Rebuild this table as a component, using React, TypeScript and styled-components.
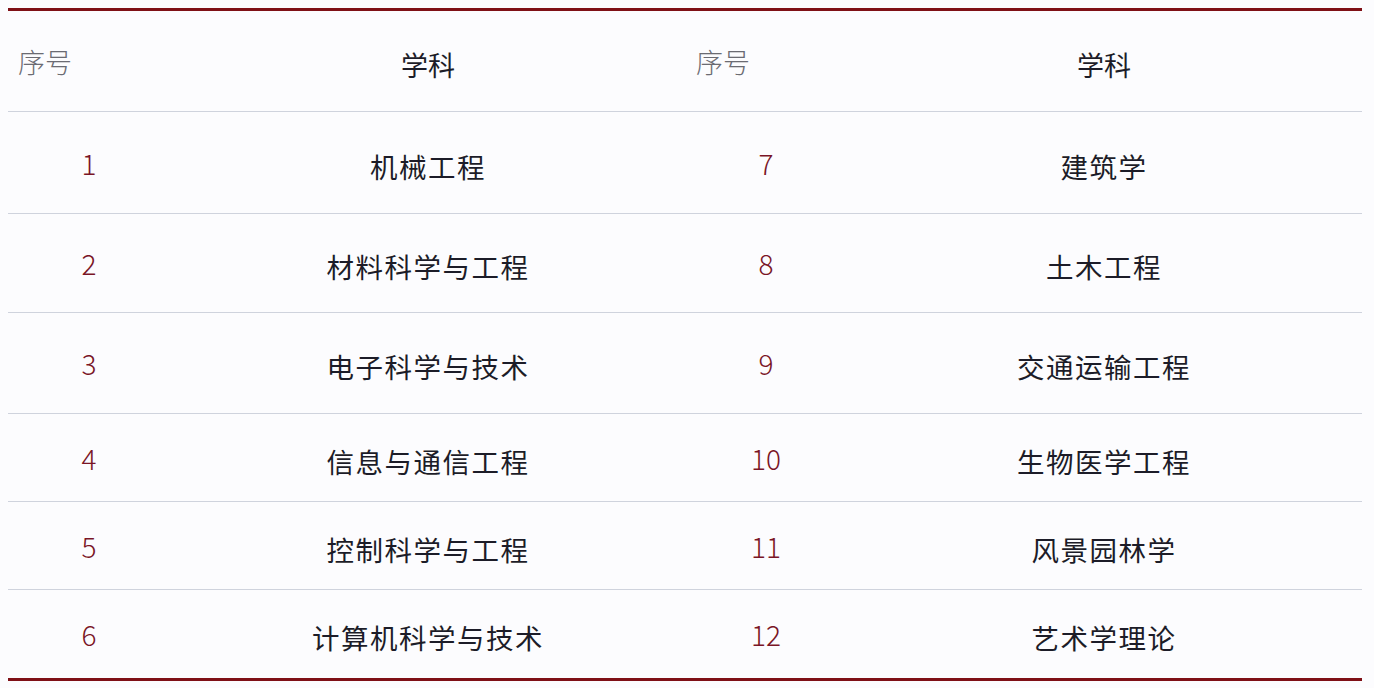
import React from 'react';
import styled, { createGlobalStyle } from 'styled-components';

const Global = createGlobalStyle`
  html, body {
    margin: 0;
    padding: 0;
    background: #fcfcfe;
  }
  body {
    font-family: "Noto Sans CJK SC", "Noto Sans", sans-serif;
  }
`;

const Page = styled.div`
  width: 1374px;
  height: 688px;
  padding: 8px 12px 0 8px;
  box-sizing: border-box;
  background: #fcfcfe;
`;

const Table = styled.table`
  width: 1354px;
  border-collapse: collapse;
  table-layout: fixed;
  border-top: 3px solid #7f1016;
  border-bottom: 3px solid #7f1016;
`;

const Row = styled.tr<{ $h: number; $last?: boolean }>`
  height: ${(p) => p.$h}px;
  border-bottom: ${(p) => (p.$last ? 'none' : '1px solid #cfd3dd')};
`;

const HeadCell = styled.th<{ $left?: boolean }>`
  font-weight: ${(p) => (p.$left ? 300 : 400)};
  font-size: 27px;
  color: ${(p) => (p.$left ? '#6b6b72' : '#1c1c28')};
  text-align: ${(p) => (p.$left ? 'left' : 'center')};
  padding: ${(p) => (p.$left ? '0 0 0 10px' : '6px 0 0')};
  vertical-align: middle;
`;

const NumCell = styled.td`
  text-align: center;
  font-family: "Noto Sans CJK SC", "Noto Sans", sans-serif;
  font-weight: 300;
  font-size: 28px;
  color: #7a1526;
  padding: 0;
  vertical-align: middle;
`;

const SubjectCell = styled.td`
  text-align: center;
  font-size: 27.5px;
  font-weight: 400;
  color: #1c1c28;
  padding: 6px 0 0;
  letter-spacing: 1.5px;
  vertical-align: middle;
`;

const rows: { a: string; b: string; c: string; d: string; h: number }[] = [
  { a: '1', b: '机械工程', c: '7', d: '建筑学', h: 102 },
  { a: '2', b: '材料科学与工程', c: '8', d: '土木工程', h: 99 },
  { a: '3', b: '电子科学与技术', c: '9', d: '交通运输工程', h: 101 },
  { a: '4', b: '信息与通信工程', c: '10', d: '生物医学工程', h: 88 },
  { a: '5', b: '控制科学与工程', c: '11', d: '风景园林学', h: 88 },
  { a: '6', b: '计算机科学与技术', c: '12', d: '艺术学理论', h: 90 },
];

export default function App() {
  return (
    <Page>
      <Global />
      <Table>
        <colgroup>
          <col style={{ width: 162 }} />
          <col style={{ width: 516 }} />
          <col style={{ width: 160 }} />
          <col style={{ width: 516 }} />
        </colgroup>
        <thead>
          <Row $h={102}>
            <HeadCell $left>序号</HeadCell>
            <HeadCell>学科</HeadCell>
            <HeadCell $left>序号</HeadCell>
            <HeadCell>学科</HeadCell>
          </Row>
        </thead>
        <tbody>
          {rows.map((r, i) => (
            <Row key={r.a} $h={r.h} $last={i === rows.length - 1}>
              <NumCell>{r.a}</NumCell>
              <SubjectCell>{r.b}</SubjectCell>
              <NumCell>{r.c}</NumCell>
              <SubjectCell>{r.d}</SubjectCell>
            </Row>
          ))}
        </tbody>
      </Table>
    </Page>
  );
}
